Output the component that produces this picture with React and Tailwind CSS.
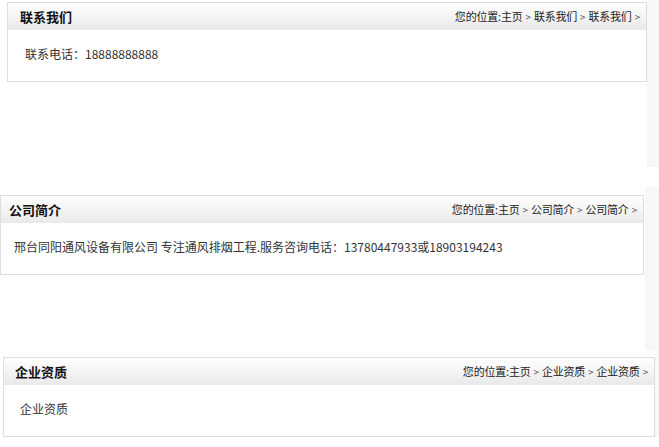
const font = { fontFamily: '"Noto Sans CJK SC", "Liberation Sans", sans-serif' };

function Crumbs({ name }) {
  const Sep = () => <span className="mx-[3px] text-[10px] text-[#555]">&gt;</span>;
  return (
    <div className="flex items-center text-[11px] tracking-[-0.2px] text-[#222]">
      <span>您的位置:主页</span>
      <Sep />
      <span>{name}</span>
      <Sep />
      <span>{name}</span>
      <Sep />
    </div>
  );
}

function Panel({ title, children, titlePad, bodyPad, crumbPad }) {
  return (
    <div className="border border-[#dddddd] bg-white">
      <div
        className={`flex h-[27px] items-center justify-between bg-gradient-to-b from-white to-[#e9e9e9] ${titlePad} ${crumbPad}`}
      >
        <h2 className="text-[13px] font-bold text-[#111]">{title}</h2>
        <Crumbs name={title} />
      </div>
      <div className={`flex h-[51px] items-center text-[12px] text-[#333] ${bodyPad}`}>{children}</div>
    </div>
  );
}

export default function App() {
  return (
    <div className="w-[659px] h-[447px] overflow-hidden bg-white" style={font}>
      {/* first capture */}
      <div className="flex h-[168px]">
        <div className="w-[647px] pl-[7px] pt-[2px]">
          <Panel title="联系我们" titlePad="pl-[12px]" crumbPad="pr-[3px]" bodyPad="pl-[17px] pb-[4px]">
            联系电话：18888888888
          </Panel>
        </div>
        <div className="h-[167px] flex-1 bg-[#f7f7f7]" />
      </div>

      {/* second capture */}
      <div className="flex h-[182px]">
        <div className="w-[645px] pt-[27px]">
          <div className="w-[644px]">
            <Panel title="公司简介" titlePad="pl-[8px]" crumbPad="pr-[3px]" bodyPad="pl-[13px] pb-[4px]">
              邢台同阳通风设备有限公司 专注通风排烟工程.服务咨询电话：13780447933或18903194243
            </Panel>
          </div>
        </div>
        <div className="mt-[19px] flex-1 bg-[#f7f7f7]" />
      </div>

      {/* third capture */}
      <div className="flex">
        <div className="w-[655px] pl-[3px] pt-[7px]">
          <Panel title="企业资质" titlePad="pl-[11px]" crumbPad="pr-[3px]" bodyPad="pl-[16px] pb-[4px]">
            企业资质
          </Panel>
        </div>
        <div className="flex-1 bg-[#f7f7f7]" />
      </div>
    </div>
  );
}
